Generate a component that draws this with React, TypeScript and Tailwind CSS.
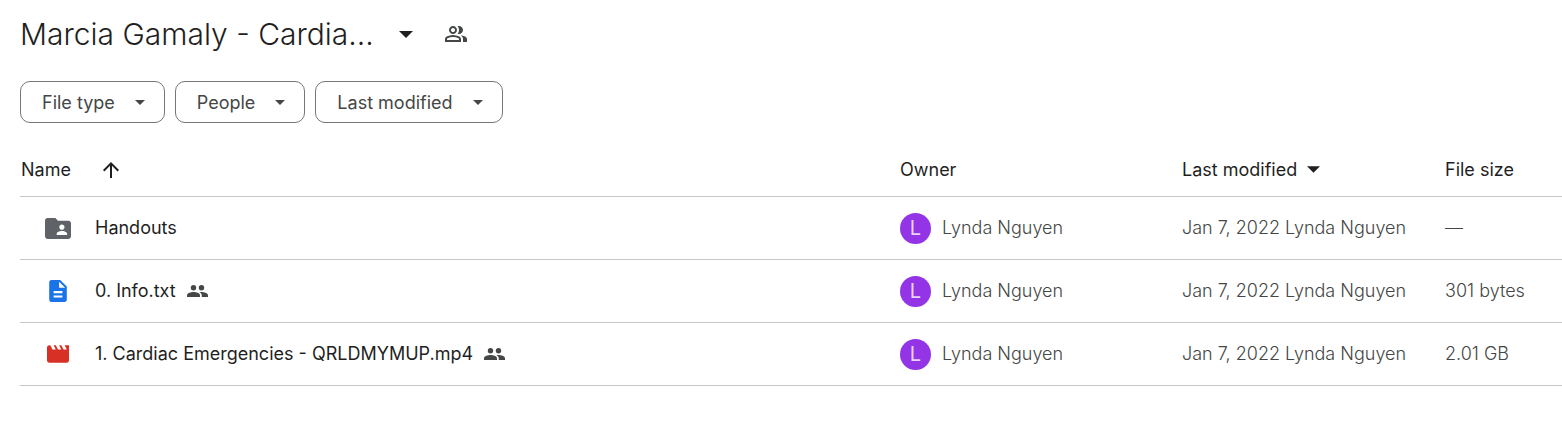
import React from "react";

type IconProps = { className?: string };

const Caret = ({ className = "" }: IconProps) => (
  <svg viewBox="0 0 14 7" className={className} fill="currentColor" aria-hidden="true">
    <path d="M0 0h14L7 7z" />
  </svg>
);

const GroupOutline = ({ className = "" }: IconProps) => (
  <svg viewBox="0 -960 960 960" className={className} fill="currentColor" aria-hidden="true">
    <path d="M40-160v-112q0-34 17.5-62.5T104-378q62-31 126-46.5T360-440q66 0 130 15.5T616-378q29 15 46.5 43.5T680-272v112H40Zm720 0v-120q0-44-24.5-84.5T666-434q51 6 96 20.5t84 35.5q36 20 55 44.5t19 53.5v120H760ZM360-480q-66 0-113-47t-47-113q0-66 47-113t113-47q66 0 113 47t47 113q0 66-47 113t-113 47Zm400-160q0 66-47 113t-113 47q-11 0-28-2.5t-28-5.5q27-32 41.5-71t14.5-81q0-42-14.5-81T544-792q14-5 28-6.5t28-1.5q66 0 113 47t47 113ZM120-240h480v-32q0-11-5.5-20T580-306q-54-27-109-40.5T360-360q-56 0-111 13.5T140-306q-9 5-14.5 14t-5.5 20v32Zm240-320q33 0 56.5-23.5T440-640q0-33-23.5-56.5T360-720q-33 0-56.5 23.5T280-640q0 33 23.5 56.5T360-560Z" />
  </svg>
);

const People = ({ className = "" }: IconProps) => (
  <svg viewBox="0 0 21 12" className={className} fill="currentColor" role="img" aria-label="Shared">
    <circle cx="6.500" cy="2.700" r="2.700" />
    <circle cx="14.500" cy="2.700" r="2.700" />
    <path d="M0 12v-1.600C0 7.900 4 7.100 6.500 7.100S13 7.900 13 10.400V12z" />
    <path d="M14.800 12H21v-1.600c0-2.500-4-3.300-6.500-3.300-.7 0-1.500.1-2.200.2 1.600.7 2.500 1.800 2.500 3.300z" />
  </svg>
);

const SortArrow = ({ className = "" }: IconProps) => (
  <svg viewBox="4 4 16 16" className={className} fill="currentColor" aria-hidden="true">
    <path d="M4 12l1.410 1.410L11 7.830V20h2V7.830l5.580 5.590L20 12l-8-8-8 8z" />
  </svg>
);

const SharedFolder = ({ className = "" }: IconProps) => (
  <svg viewBox="2 4 20 16" className={className} fill="currentColor" aria-hidden="true">
    <path d="M20 6h-8l-2-2H4c-1.100 0-1.990.9-1.990 2L2 18c0 1.100.9 2 2 2h16c1.100 0 2-.9 2-2V8c0-1.100-.9-2-2-2zm-5 3c1.100 0 2 .9 2 2s-.9 2-2 2-2-.9-2-2 .9-2 2-2zm4 8h-8v-1c0-1.330 2.670-2 4-2s4 .67 4 2v1z" />
  </svg>
);

const TextFile = ({ className = "" }: IconProps) => (
  <svg viewBox="4 2 16 20" className={className} fill="currentColor" aria-hidden="true">
    <path d="M14 2H6c-1.100 0-1.990.9-1.990 2L4 20c0 1.100.89 2 1.990 2H18c1.100 0 2-.9 2-2V8l-6-6zm2 16H8v-2h8v2zm0-4H8v-2h8v2zm-3-5V3.500L18.500 9H13z" />
  </svg>
);

const Video = ({ className = "" }: IconProps) => (
  <svg viewBox="2 4 20 16" className={className} fill="currentColor" aria-hidden="true">
    <path d="M18 4l2 4h-3l-2-4h-2l2 4h-3l-2-4H8l2 4H7L5 4H4c-1.100 0-1.990.9-1.990 2L2 18c0 1.100.9 2 2 2h16c1.100 0 2-.9 2-2V4h-4z" />
  </svg>
);

const filters = ["File type", "People", "Last modified"];

const files = [
  { name: "Handouts", icon: <SharedFolder className="h-[21px] w-[26px] text-[#5f6368]" />, shared: false, size: "—" },
  { name: "0. Info.txt", icon: <TextFile className="h-[22px] w-[18px] text-[#1a73e8]" />, shared: true, size: "301 bytes" },
  { name: "1. Cardiac Emergencies - QRLDMYMUP.mp4", icon: <Video className="h-[18px] w-[22px] text-[#d93025]" />, shared: true, size: "2.01 GB" },
];

export default function App() {
  return (
    <main className="bg-white pl-5 font-['Inter','Liberation_Sans',sans-serif] text-lg text-[#1f1f1f]">
      <header className="flex h-[68px] items-center">
        <h1 className="text-[30px] font-light">
          <button className="flex items-center gap-[25px]">
            Marcia Gamaly - Cardia...
            <Caret className="h-[7px] w-[14px]" />
          </button>
        </h1>
        <button aria-label="Manage access" className="ml-[31px] text-[#444746]">
          <GroupOutline className="size-6" />
        </button>
      </header>

      <div className="mt-[13px] flex gap-[10px]">
        {filters.map((label) => (
          <button
            key={label}
            className="flex h-[42px] items-center gap-5 rounded-[10px] border border-[#747775] pt-px pr-[19px] pl-[21px] text-[#444746]"
          >
            {label}
            <Caret className="h-[5px] w-[10px]" />
          </button>
        ))}
      </div>

      <table className="mt-5 w-full table-fixed border-collapse text-left">
        <colgroup>
          <col />
          <col className="w-[282px]" />
          <col className="w-[263px]" />
          <col className="w-[117px]" />
        </colgroup>
        <thead>
          <tr className="h-[53px] border-b border-[#c7c7c7]">
            <th className="pt-px pl-px font-normal">
              <button className="flex items-center gap-8">
                Name
                <SortArrow className="size-4" />
              </button>
            </th>
            <th className="pt-px font-normal">Owner</th>
            <th className="pt-px font-normal">
              <button className="flex items-center gap-[10px]">
                Last modified
                <Caret className="h-[7px] w-[13px]" />
              </button>
            </th>
            <th className="pt-px font-normal">File size</th>
          </tr>
        </thead>
        <tbody>
          {files.map((file) => (
            <tr key={file.name} className="h-[63px] border-b border-[#c7c7c7] text-[#444746]">
              <td className="pt-px">
                <div className="flex items-center text-[#1f1f1f]">
                  <span className="flex w-[75px] justify-center">{file.icon}</span>
                  {file.name}
                  {file.shared && <People className="ml-[11px] h-[12px] w-[21px] text-[#444746]" />}
                </div>
              </td>
              <td className="pt-px">
                <div className="flex items-center gap-[11px] font-light">
                  <span className="flex size-[31px] items-center justify-center rounded-full bg-[#9334e6] text-xl font-normal text-[#e9d2fd]">
                    L
                  </span>
                  Lynda Nguyen
                </div>
              </td>
              <td className="pt-px">
                <div className="flex gap-[5px] font-light">
                  <span>Jan 7, 2022</span>
                  <span>Lynda Nguyen</span>
                </div>
              </td>
              <td className="pt-px font-light">{file.size}</td>
            </tr>
          ))}
        </tbody>
      </table>
    </main>
  );
}
